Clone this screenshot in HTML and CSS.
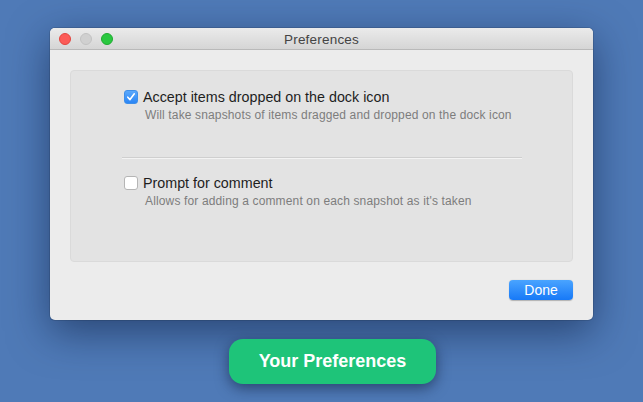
FILE: index.html
```html
<!DOCTYPE html>
<html>
<head>
<meta charset="utf-8">
<link rel="stylesheet" href="styles.css">
</head>
<body>
<div class="stage">
  <div class="window">
    <div class="titlebar">
      <div class="lights">
        <span class="light red"></span>
        <span class="light gray"></span>
        <span class="light green"></span>
      </div>
      <div class="title">Preferences</div>
    </div>
    <div class="content">
      <div class="panel">
        <div class="option">
          <div class="row">
            <span class="checkbox checked">
              <svg width="10" height="10" viewBox="0 0 10 10"><path d="M1.8 5.2 L4 7.6 L8.3 1.8" fill="none" stroke="#fff" stroke-width="1.6" stroke-linecap="round" stroke-linejoin="round"/></svg>
            </span>
            <span class="label">Accept items dropped on the dock icon</span>
          </div>
          <div class="desc">Will take snapshots of items dragged and dropped on the dock icon</div>
        </div>
        <div class="sep"></div>
        <div class="option second">
          <div class="row">
            <span class="checkbox"></span>
            <span class="label">Prompt for comment</span>
          </div>
          <div class="desc">Allows for adding a comment on each snapshot as it's taken</div>
        </div>
      </div>
      <div class="footer">
        <button class="done">Done</button>
      </div>
    </div>
  </div>
  <div class="cta-wrap">
    <div class="cta">Your Preferences</div>
  </div>
</div>
</body>
</html>
```
FILE: styles.css
```css
html, body {
  margin: 0;
  padding: 0;
}
body {
  width: 643px;
  height: 402px;
  overflow: hidden;
  background: #4f7ab7;
  font-family: "Helvetica Neue", "Liberation Sans", Arial, sans-serif;
}
.stage {
  display: flex;
  flex-direction: column;
  padding-top: 28px;
  padding-left: 50px;
}
.window {
  width: 543px;
  height: 292px;
  background: #ececec;
  border-radius: 5px;
  box-shadow: 0 12px 40px rgba(10, 25, 60, 0.55), 0 0 0 1px rgba(0,0,0,0.12);
  display: flex;
  flex-direction: column;
  overflow: hidden;
}
.titlebar {
  height: 22px;
  background: linear-gradient(#ebebeb, #d5d5d5);
  border-bottom: 1px solid #b9b9b9;
  box-sizing: border-box;
  display: flex;
  align-items: center;
  position: relative;
}
.lights {
  display: flex;
  gap: 9px;
  padding-left: 8px;
  position: absolute;
  left: 1px;
  top: 5px;
}
.light {
  width: 12px;
  height: 12px;
  border-radius: 50%;
  box-sizing: border-box;
}
.light.red { background: #fc5b57; border: 0.5px solid #e2463f; }
.light.gray { background: #d0d0d0; border: 0.5px solid #c2c2c2; }
.light.green { background: #2ac840; border: 0.5px solid #1faa31; }
.title {
  flex: 1;
  text-align: center;
  font-size: 13.5px;
  letter-spacing: 0.2px;
  color: #444;
  padding-top: 1px;
}
.content {
  flex: 1;
  display: flex;
  flex-direction: column;
  padding: 20px 20px 0 20px;
}
.panel {
  height: 192px;
  box-sizing: border-box;
  background: #e3e3e3;
  border: 1px solid #dadada;
  border-radius: 4px;
  padding: 18px 50px 0 53px;
  display: flex;
  flex-direction: column;
}
.row {
  display: flex;
  align-items: center;
  gap: 5px;
}
.checkbox {
  width: 14px;
  height: 14px;
  box-sizing: border-box;
  border-radius: 3px;
  background: #fff;
  border: 1px solid #b5b5b5;
  display: flex;
  align-items: center;
  justify-content: center;
}
.checkbox.checked {
  background: linear-gradient(#5aa8fb, #2b86f5);
  border: 1px solid #3f8fe8;
}
.label {
  font-size: 14.3px;
  color: #1e1e1e;
}
.desc {
  font-size: 12px;
  letter-spacing: 0.14px;
  color: #7d7d7d;
  padding-left: 21px;
  margin-top: 3px;
}
.sep {
  height: 1px;
  background: #cfcfcf;
  border-bottom: 1px solid #f3f3f3;
  margin: 35px 0 0 -2px;
}
.option.second {
  margin-top: 16px;
}
.footer {
  display: flex;
  justify-content: flex-end;
  padding-top: 18px;
}
.done {
  width: 64px;
  height: 20px;
  border: none;
  border-radius: 4px;
  background: linear-gradient(#4aa4ff, #1779f7);
  box-shadow: 0 0.5px 1px rgba(0,0,0,0.25);
  color: #fff;
  font-family: "Helvetica Neue", "Liberation Sans", Arial, sans-serif;
  font-size: 14px;
  padding: 0;
}
.cta-wrap {
  display: flex;
  padding-left: 179px;
  padding-top: 19px;
}
.cta {
  width: 207px;
  height: 45px;
  border-radius: 14px;
  background: #1ec479;
  box-shadow: 0 4px 14px rgba(15, 30, 60, 0.6);
  color: #fff;
  font-weight: bold;
  font-size: 18px;
  display: flex;
  align-items: center;
  justify-content: center;
}
```
